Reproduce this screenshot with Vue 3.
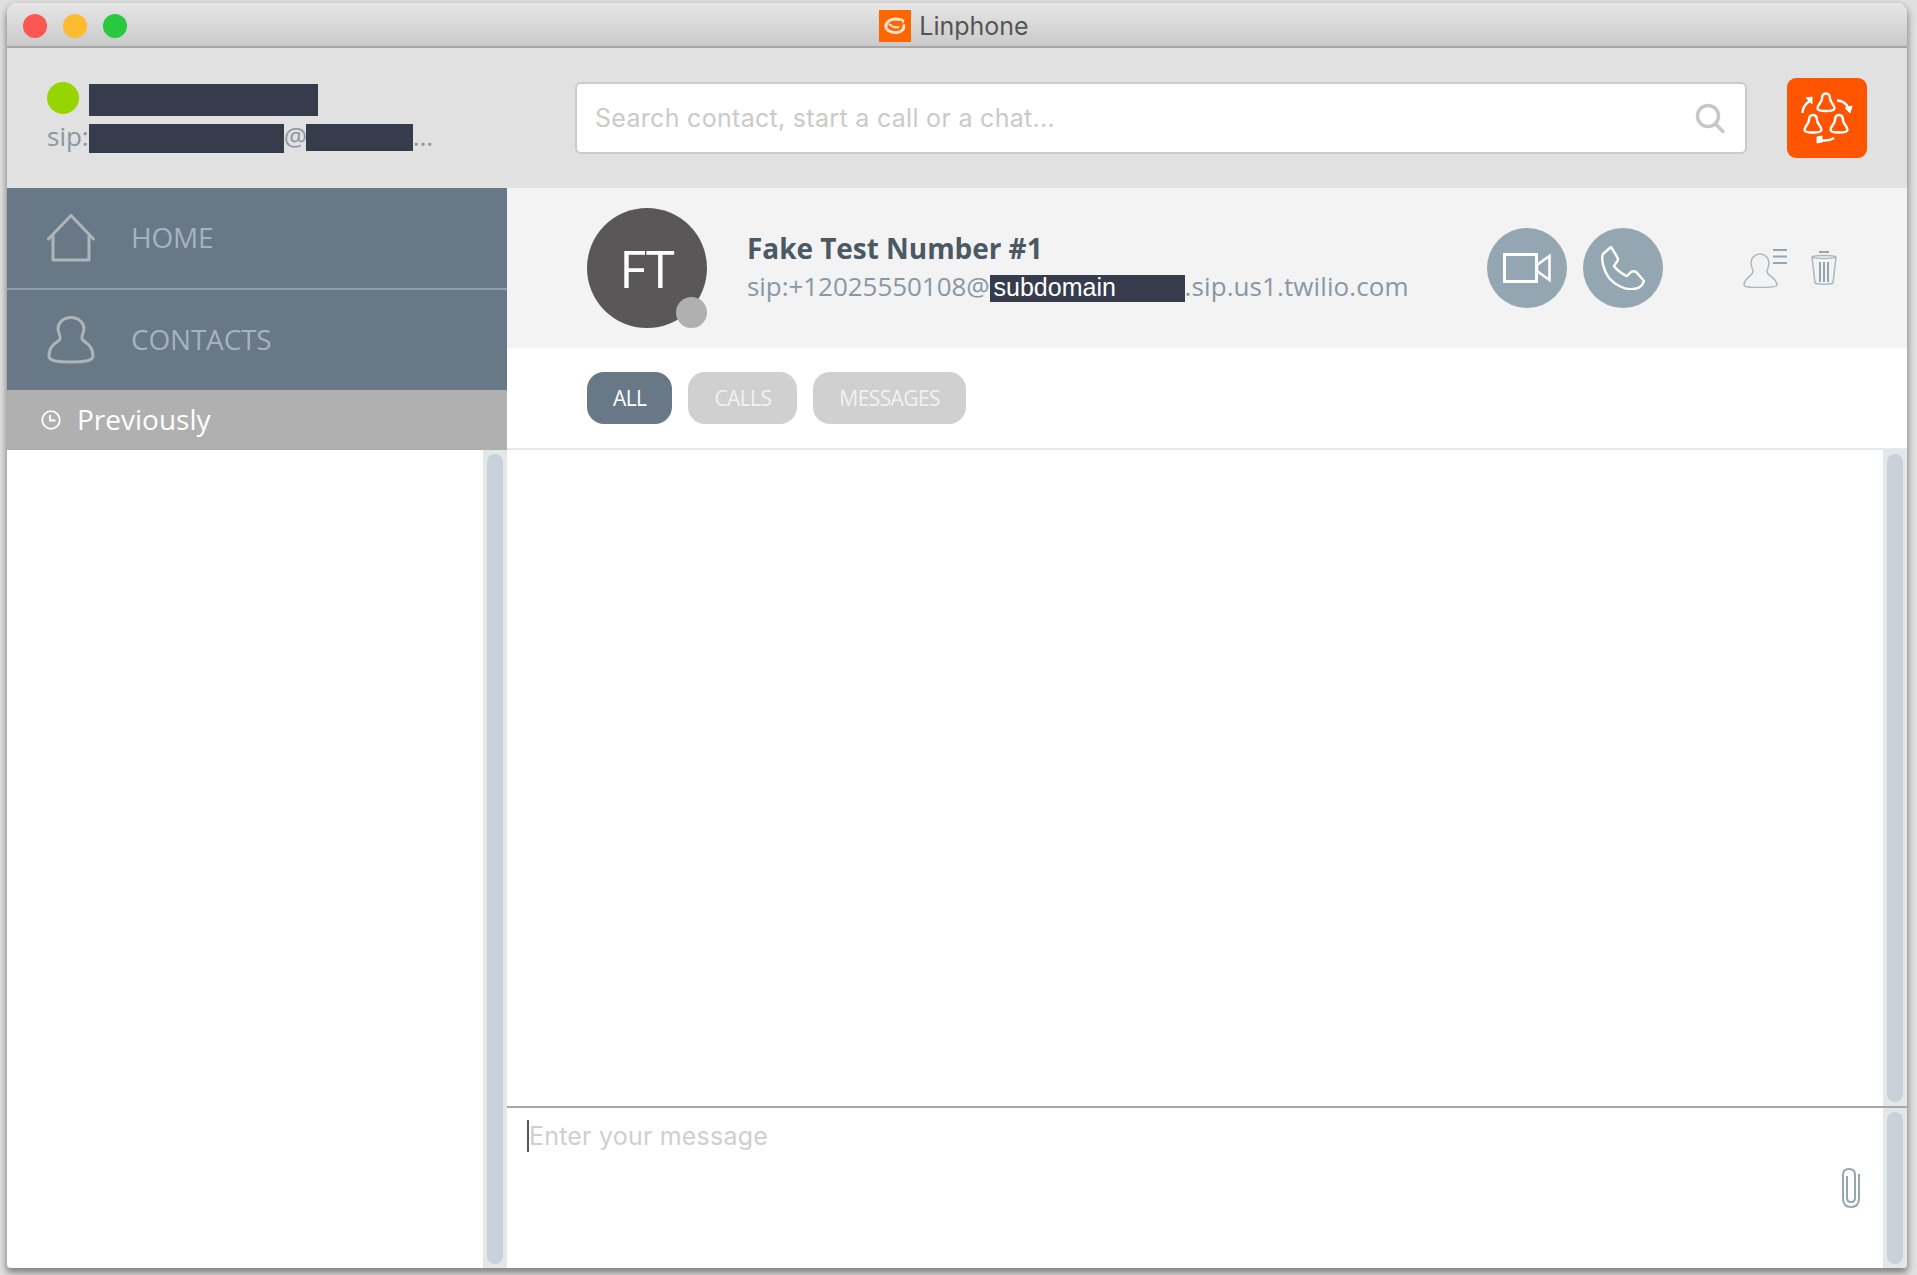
<script setup>
const tabs = [
  { label: 'ALL', active: true },
  { label: 'CALLS', active: false },
  { label: 'MESSAGES', active: false }
]

const bells = [
  { id: 'top', d: 'M39 15.500c-3 0-4 2.500-4 5 0 4-4.500 6-4.500 10 0 1.500 2 2.500 8.500 2.500s8.500-1 8.500-2.500c0-4-4.500-6-4.500-10 0-2.500-1-5-4-5z' },
  { id: 'left', d: 'M26 37c-3 0-4 2.500-4 5 0 4-4.500 6-4.500 10 0 1.500 2 2.500 8.500 2.500s8.500-1 8.500-2.500c0-4-4.500-6-4.500-10 0-2.500-1-5-4-5z' },
  { id: 'right', d: 'M52 37c-3 0-4 2.500-4 5 0 4-4.500 6-4.500 10 0 1.500 2 2.500 8.500 2.500s8.500-1 8.500-2.500c0-4-4.500-6-4.500-10 0-2.500-1-5-4-5z' }
]
</script>

<template>
  <div class="desktop">
    <div class="window">
      <div class="titlebar">
        <div class="lights">
          <span class="light red"></span>
          <span class="light yellow"></span>
          <span class="light green"></span>
        </div>
        <div class="title">
          <svg class="app-icon" width="32" height="32" viewBox="0 0 32 32">
            <rect width="32" height="32" fill="#ff6600" />
            <path d="M21 9.500C15 8 8 10 7 15c-1 5 5 8 11 7.500 4-.5 7-3 7-7" fill="none" stroke="#ffe0cf" stroke-width="3" stroke-linecap="round" />
            <path d="M10.500 14.500c3 2.500 6 3.500 9 2.500" fill="none" stroke="#ffe0cf" stroke-width="2.200" stroke-linecap="round" />
            <path d="M21 8l4.500 2-1.500 4z" fill="#ffe0cf" />
          </svg>
          <span>Linphone</span>
        </div>
      </div>

      <div class="topbar">
        <div class="account">
          <div class="account-name">
            <span class="presence"></span>
            <span class="redact name-redact"></span>
          </div>
          <div class="account-sip">
            <span>sip:</span><span class="redact sip-redact"></span><span class="at">@</span><span class="redact host-redact"></span><span>...</span>
          </div>
        </div>
        <div class="search">
          <span class="search-text">Search contact, start a call or a chat...</span>
          <svg width="30" height="30" viewBox="0 0 30 30" fill="none" stroke="#c8c8c8" stroke-width="3.500">
            <circle cx="13" cy="13" r="10.500" />
            <path d="M20.500 21l7.500 7.500" stroke-linecap="round" />
          </svg>
        </div>
        <button class="conf-button">
          <svg width="80" height="80" viewBox="0 0 80 80" fill="none" stroke="#fff" stroke-width="2.400">
            <path v-for="bell in bells" :key="bell.id" :d="bell.d" />
            <path d="M15.500 35c0-5 3-9 7-12" />
            <path d="M19 20l6-1 0 7z" fill="#fff" stroke-width="1" />
            <path d="M50 22.500c5 0 9 3 11 7" />
            <path d="M58 30l7-2-2 7z" fill="#fff" stroke-width="1" />
            <path d="M47 60c-3 2-9 3-14 2" />
            <path d="M35 58l-5 1 0 6 5-1z" fill="#fff" stroke-width="1" />
          </svg>
        </button>
      </div>

      <div class="body">
        <aside class="sidebar">
          <nav class="nav">
            <div class="nav-item nav-home">
              <svg width="48" height="48" viewBox="0 0 48 48" fill="none" stroke="#adb5bb" stroke-width="3" stroke-linejoin="round" stroke-linecap="round">
                <path d="M1.500 25L24 1.500 46.500 25M6 20v26h36V20" />
              </svg>
              <span class="nav-label">HOME</span>
            </div>
            <div class="nav-item">
              <svg width="48" height="48" viewBox="0 0 48 48" fill="none" stroke="#adb5bb" stroke-width="3">
                <path d="M24 1.500c-8 0-13 5.500-13 11.500 0 4 3 6 2 10-1 3-11 5-11 17 0 5 8 6 22 6s22-1 22-6c0-12-10-14-11-17-1-4 2-6 2-10 0-6-5-11.500-13-11.500z" />
              </svg>
              <span class="nav-label">CONTACTS</span>
            </div>
          </nav>
          <div class="previously">
            <svg width="20" height="20" viewBox="0 0 20 20" fill="none" stroke="#fff" stroke-width="1.800">
              <circle cx="10" cy="10" r="8.800" />
              <path d="M9 5v5.500h5.500" />
            </svg>
            <span class="previously-label">Previously</span>
          </div>
          <div class="side-list">
            <div class="side-empty"></div>
            <div class="scrollbar"><div class="thumb"></div></div>
          </div>
        </aside>

        <main class="conversation">
          <div class="contact-bar">
            <div class="avatar">
              FT
              <span class="avatar-status"></span>
            </div>
            <div class="contact-info">
              <div class="contact-name">Fake Test Number #1</div>
              <div class="contact-sip">
                <span class="sip-text">sip:+12025550108@</span><span class="subdomain">subdomain</span><span class="sip-text sip-host">.sip.us1.twilio.com</span>
              </div>
            </div>
            <div class="call-actions">
              <button class="round-button">
                <svg width="48" height="30" viewBox="0 0 48 30" fill="none" stroke="#fff" stroke-width="3">
                  <rect x="1.500" y="1.500" width="32" height="27" />
                  <path d="M46.500 3v24L34 18v-6z" stroke-width="2.600" />
                </svg>
              </button>
              <button class="round-button">
                <svg width="44" height="44" viewBox="0 0 44 44" fill="none" stroke="#fff" stroke-width="2.400" stroke-linejoin="round">
                  <path d="M10 1L2 8C0 12 2 24 8 32c6 7 16 12 24 11 4 0 9-2 11-8l-6-7c-2-3-5-3-7-2l-4 4c-4-1-11-7-13-10l4-6c0-2-1-3-2-5z" />
                </svg>
              </button>
            </div>
            <div class="contact-tools">
              <svg width="44" height="39" viewBox="0 0 44 39" fill="none" stroke="#a9b9c4" stroke-width="1.500">
                <path d="M17 5c-5 0-9 4-9 9 0 4 2 6 2 9-1 4-9 6-9 13 0 2 5 2.500 16 2.500s17-.5 17-2.500c0-7-9-9-10-13 0-3 2-5 2-9 0-5-4-9-9-9z" />
                <path d="M30 1h14M30 7.500h14M30 14h14" stroke="#93a6b2" stroke-width="2" />
              </svg>
              <svg width="26" height="34" viewBox="0 0 26 34" fill="none" stroke="#a9b9c4" stroke-width="1.500">
                <path d="M8 1h10" stroke="#93a6b2" stroke-width="2" />
                <path d="M1 6c2-2 22-2 24 0l-3 26c-1 1.500-17 1.500-18 0z" />
                <path d="M1 6c3 2 21 2 24 0" />
                <path d="M9 11v20M13 11v20M17 11v20" stroke="#93a6b2" stroke-width="2" />
              </svg>
            </div>
          </div>

          <div class="filters">
            <button v-for="tab in tabs" :key="tab.label" class="filter" :class="{ active: tab.active }">
              {{ tab.label }}
            </button>
          </div>

          <div class="history">
            <div class="history-main"></div>
            <div class="scrollbar"><div class="thumb"></div></div>
          </div>

          <div class="composer">
            <div class="composer-main">
              <div class="composer-line">
                <span class="caret"></span>
                <span class="placeholder">Enter your message</span>
              </div>
              <svg class="clip" width="20" height="40" viewBox="0 0 20 40" fill="none" stroke="#93a6b2" stroke-width="2">
                <path d="M6 8v22c0 3 1.500 4 4 4s4-1 4-4V7c0-4-2.500-6-6-6S2 3 2 7v23c0 6 3 9 8 9s8-3 8-9V6" />
              </svg>
            </div>
            <div class="scrollbar"><div class="thumb"></div></div>
          </div>
        </main>
      </div>
    </div>
  </div>
</template>

<style scoped>
.desktop {
  width: 1917px;
  height: 1275px;
  padding: 3px 10px 7px 7px;
  box-sizing: border-box;
  background: #e0e0e0;
  font-family: "Open Sans", "Noto Sans", sans-serif;
  overflow: hidden;
}

.window {
  width: 1900px;
  height: 1265px;
  background: #fff;
  border-radius: 10px 10px 4px 4px;
  box-shadow: 0 4px 7px 1px rgba(0, 0, 0, 0.42);
  overflow: hidden;
  display: flex;
  flex-direction: column;
}

.titlebar {
  height: 40px;
  flex: none;
  padding-top: 3px;
  position: relative;
  display: flex;
  align-items: center;
  justify-content: center;
  background: linear-gradient(#e6e6e6, #cacaca);
  border-bottom: 2px solid #a6a6a6;
}

.lights {
  position: absolute;
  left: 16px;
  top: 11px;
  display: flex;
  gap: 16px;
}

.light {
  width: 24px;
  height: 24px;
  border-radius: 50%;
}

.red { background: #fc5753; }
.yellow { background: #fdbc2e; }
.green { background: #29c93f; }

.title {
  display: flex;
  align-items: center;
  gap: 8px;
  margin-right: 6px;
  font-family: Inter, sans-serif;
  font-size: 25px;
  color: #555;
}

.topbar {
  height: 140px;
  flex: none;
  display: flex;
  align-items: center;
  background: #e1e1e1;
}

.account {
  width: 568px;
  flex: none;
  align-self: flex-start;
  box-sizing: border-box;
  padding: 34px 0 0 40px;
}

.account-name {
  display: flex;
  align-items: flex-start;
  gap: 10px;
  height: 32px;
}

.presence {
  width: 32px;
  height: 32px;
  border-radius: 50%;
  background: #96d500;
}

.redact {
  display: inline-block;
  background: #373c4d;
}

.name-redact {
  width: 229px;
  height: 32px;
  margin-top: 2px;
}

.account-sip {
  display: flex;
  align-items: flex-start;
  margin-top: 10px;
  height: 29px;
  font-size: 26px;
  line-height: 25px;
  color: #8a97a3;
}

.at {
  width: 22px;
}

.sip-redact {
  width: 195px;
  height: 29px;
}

.host-redact {
  width: 107px;
  height: 27px;
}

.search {
  width: 1172px;
  height: 72px;
  flex: none;
  box-sizing: border-box;
  display: flex;
  align-items: center;
  justify-content: space-between;
  padding: 0 20px 0 18px;
  background: #fff;
  border: 2px solid #cbcbcb;
  border-radius: 6px;
}

.search-text {
  font-family: Inter, sans-serif;
  font-size: 25px;
  letter-spacing: 0.3px;
  color: #cacaca;
}

.conf-button {
  width: 80px;
  height: 80px;
  margin: 0 0 0 40px;
  padding: 0;
  border: none;
  border-radius: 9px;
  background: #ff5400;
  display: flex;
  align-items: center;
  justify-content: center;
}

.body {
  flex: 1;
  min-height: 0;
  display: flex;
}

.sidebar {
  width: 500px;
  flex: none;
  display: flex;
  flex-direction: column;
}

.nav {
  background: #687887;
}

.nav-item {
  height: 100px;
  display: flex;
  align-items: center;
  gap: 36px;
  padding-left: 40px;
  font-size: 28px;
  letter-spacing: -0.2px;
  color: #a3b3c0;
}

.nav-label {
  margin-bottom: 2px;
}

.nav-home {
  border-bottom: 2px solid #8fa1b1;
}

.previously {
  height: 60px;
  flex: none;
  display: flex;
  align-items: center;
  gap: 16px;
  padding-left: 34px;
  background: #b0b0b0;
  color: #fff;
  font-size: 28px;
}

.previously-label {
  margin-bottom: 2px;
}

.side-list {
  flex: 1;
  min-height: 0;
  display: flex;
}

.side-empty {
  flex: 1;
}

.scrollbar {
  width: 24px;
  flex: none;
  box-sizing: border-box;
  padding: 4px;
  background: #e4e7ea;
}

.thumb {
  height: 100%;
  background: #c8d0d9;
  border-radius: 8px;
}

.conversation {
  flex: 1;
  min-width: 0;
  display: flex;
  flex-direction: column;
}

.contact-bar {
  height: 160px;
  flex: none;
  display: flex;
  align-items: center;
  background: #f3f3f3;
  padding-left: 80px;
}

.avatar {
  width: 120px;
  height: 120px;
  flex: none;
  position: relative;
  border-radius: 50%;
  background: #5a5758;
  color: #fff;
  font-size: 52px;
  line-height: 120px;
  text-align: center;
}

.avatar-status {
  position: absolute;
  right: 0;
  bottom: 0;
  width: 31px;
  height: 31px;
  border-radius: 50%;
  background: #b0b0b0;
}

.contact-info {
  width: 780px;
  flex: none;
  padding: 0 0 4px 40px;
  box-sizing: border-box;
}

.contact-name {
  font-size: 28px;
  line-height: 38px;
  font-weight: 700;
  letter-spacing: -0.05px;
  color: #4b5964;
}

.contact-sip {
  display: flex;
  align-items: center;
  margin-top: 6px;
  font-size: 26px;
  line-height: 26px;
  letter-spacing: -0.05px;
  color: #8a97a3;
}

.sip-text {
  margin-bottom: 4px;
}

.sip-host {
  letter-spacing: 0.1px;
}

.subdomain {
  width: 195px;
  height: 27px;
  box-sizing: border-box;
  padding-left: 4px;
  background: #373c4d;
  color: #fff;
  font-family: "Liberation Sans", sans-serif;
  font-size: 25px;
  line-height: 25px;
  letter-spacing: 0;
}

.call-actions {
  width: 256px;
  flex: none;
  display: flex;
  gap: 16px;
}

.round-button {
  width: 80px;
  height: 80px;
  padding: 0;
  border: none;
  border-radius: 50%;
  background: #93a6b2;
  display: flex;
  align-items: center;
  justify-content: center;
}

.contact-tools {
  display: flex;
  align-items: center;
  gap: 24px;
}

.filters {
  height: 100px;
  flex: none;
  display: flex;
  align-items: center;
  gap: 16px;
  padding-left: 80px;
  border-bottom: 2px solid #e4ebf0;
}

.filter {
  height: 52px;
  padding: 0 26px;
  border: none;
  border-radius: 17px;
  background: #d0d0d0;
  color: #f2f2f2;
  font-family: "Open Sans", sans-serif;
  font-size: 21px;
  letter-spacing: -0.6px;
}

.filter.active {
  background: #687887;
  color: #fff;
}

.history {
  flex: 1;
  min-height: 0;
  display: flex;
  border-bottom: 2px solid #a8a8a8;
}

.history-main {
  flex: 1;
}

.composer {
  height: 160px;
  flex: none;
  display: flex;
}

.composer-main {
  flex: 1;
  min-width: 0;
  padding: 12px 22px 0 20px;
  display: flex;
  flex-direction: column;
}

.composer-line {
  display: flex;
  align-items: center;
  height: 32px;
}

.caret {
  width: 2px;
  height: 32px;
  background: #555566;
}

.placeholder {
  font-family: Inter, sans-serif;
  font-size: 25px;
  letter-spacing: 0.2px;
  color: #cfcfcf;
}

.clip {
  align-self: flex-end;
  margin-top: 16px;
}
</style>

<style>
html, body {
  margin: 0;
  background: #e0e0e0;
}
</style>
